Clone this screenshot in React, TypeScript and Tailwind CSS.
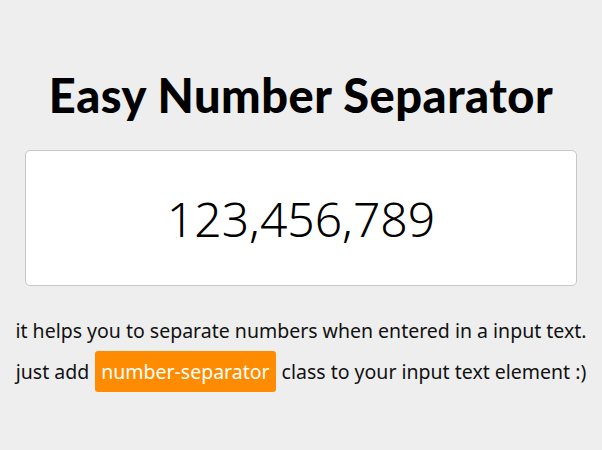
import * as React from 'react';

export default function App() {
    const [valor, setValor] = React.useState('123,456,789');

    const formatar = (texto: string) => {
        const digitos = texto.replace(/[^\d]/g, '');
        return digitos.replace(/\B(?=(\d{3})+(?!\d))/g, ',');
    };

    return (
        <div className="min-h-[450px] w-full bg-[#eeeeee] flex flex-col items-center pt-[67px] px-[25px]">
            <h1
                className="text-[47px] leading-[57px] font-black text-black tracking-[0.5px]"
                style={{ fontFamily: '"Lato", "DejaVu Sans", sans-serif' }}
            >
                Easy Number Separator
            </h1>
            <input
                type="text"
                value={valor}
                onChange={(e) => setValor(formatar(e.target.value))}
                className="mt-[26px] w-full h-[136px] bg-white border border-[#c8c8c8] rounded-[5px] text-center text-[48px] font-light text-black outline-none"
                style={{ fontFamily: '"Noto Sans", "Open Sans", sans-serif' }}
            />
            <div
                className="mt-[30px] flex flex-col items-center text-[19.5px] text-[#111] gap-[6px]"
                style={{ fontFamily: '"Noto Sans", "Open Sans", sans-serif' }}
            >
                <p className="whitespace-nowrap">it helps you to separate numbers when entered in a input text.</p>
                <p className="whitespace-nowrap flex items-center">
                    just add
                    <span className="mx-[6px] bg-[#ff8c00] text-white rounded-[3px] px-[6px] h-[41px] flex items-center">number-separator</span>
                    class to your input text element :)
                </p>
            </div>
        </div>
    );
}
